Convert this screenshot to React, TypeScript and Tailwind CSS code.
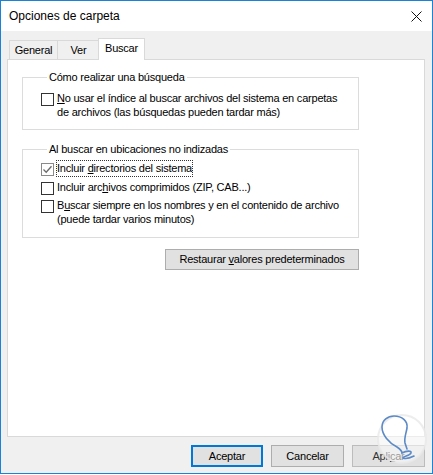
import { useState } from 'react';

function CheckBox({ checked }: { checked?: boolean }) {
  return (
    <span
      className={`mt-[2px] flex h-[13px] w-[13px] shrink-0 items-center justify-center border bg-white ${
        checked ? 'border-[#8a8a8a]' : 'border-[#333333]'
      }`}
    >
      {checked && (
        <svg width="11" height="11" viewBox="0 0 11 11">
          <path d="M1.5 5.5 L4.2 8.2 L9.5 2.2" fill="none" stroke="#6a6a6a" strokeWidth="1.3" />
        </svg>
      )}
    </span>
  );
}

function GroupBox({ title, className, children }: { title: string; className: string; children: React.ReactNode }) {
  return (
    <fieldset className={`w-[337px] border border-[#dcdcdc] pl-[18px] ${className}`}>
      <legend className="ml-[6px] px-[2px] leading-[13px]">{title}</legend>
      {children}
    </fieldset>
  );
}

export default function App() {
  const [opts, setOpts] = useState({ noIndex: false, sysDirs: true, zip: false, content: false });
  const toggle = (k: keyof typeof opts) => setOpts(p => ({ ...p, [k]: !p[k] }));

  return (
    <div
      className="relative flex h-[474px] w-[433px] flex-col overflow-hidden border border-[#1883d7] bg-[#f0f0f0] text-[11px] text-black"
      style={{ fontFamily: '"Liberation Sans", Arial, sans-serif' }}
    >
      {/* Title bar */}
      <div className="flex h-[30px] items-center justify-between bg-white pl-[8px] pr-[10px]">
        <span className="text-[12px]">Opciones de carpeta</span>
        <svg width="11" height="11" viewBox="0 0 11 11">
          <path d="M0.5 0.5 L10.5 10.5 M10.5 0.5 L0.5 10.5" stroke="#111" strokeWidth="1" />
        </svg>
      </div>

      <div className="flex flex-1 flex-col pl-[6px] pt-[7px] tracking-[-0.22px]">
        {/* Tabs */}
        <div className="ml-[2px] flex h-[21px] items-end">
          <div className="flex h-[19px] w-[48px] items-center justify-center border-l border-t border-[#d9d9d9]">General</div>
          <div className="flex h-[19px] w-[43px] items-center justify-center border-x border-t border-[#d9d9d9]">Ver</div>
          <div className="relative z-10 -mb-px -ml-[2px] flex h-[22px] w-[47px] items-center justify-center border-x border-t border-[#d9d9d9] bg-white pb-[2px]">
            Buscar
          </div>
        </div>

        {/* Panel */}
        <div className="flex h-[378px] w-[418px] flex-col border border-[#d9d9d9] bg-white pl-[14px] pt-[11px]">
          <GroupBox title="Cómo realizar una búsqueda" className="h-[59px]">
            <label className="mt-[7px] flex gap-[3px] leading-[14px]" onClick={() => toggle('noIndex')}>
              <CheckBox checked={opts.noIndex} />
              <span>
                <u>N</u>o usar el índice al buscar archivos del sistema en carpetas
                <br />
                de archivos (las búsquedas pueden tardar más)
              </span>
            </label>
          </GroupBox>

          <GroupBox title="Al buscar en ubicaciones no indizadas" className="mt-[13px] h-[95px]">
            <label className="mt-[5px] flex gap-[3px] leading-[14px]" onClick={() => toggle('sysDirs')}>
              <CheckBox checked={opts.sysDirs} />
              <span className="outline outline-1 outline-dotted outline-[#333]">
                Incluir <u>d</u>irectorios del sistema
              </span>
            </label>
            <label className="mt-[4px] flex gap-[3px] leading-[14px]" onClick={() => toggle('zip')}>
              <CheckBox checked={opts.zip} />
              <span>
                Incluir arc<u>h</u>ivos comprimidos (ZIP, CAB...)
              </span>
            </label>
            <label className="mt-[3px] flex gap-[3px] leading-[14px]" onClick={() => toggle('content')}>
              <CheckBox checked={opts.content} />
              <span>
                B<u>u</u>scar siempre en los nombres y en el contenido de archivo
                <br />
                (puede tardar varios minutos)
              </span>
            </label>
          </GroupBox>

          <div className="mt-[11px] flex w-[337px] justify-end">
            <button className="h-[21px] w-[194px] border border-[#adadad] bg-[#e1e1e1]">
              Restaurar <u>v</u>alores predeterminados
            </button>
          </div>
        </div>

        {/* Dialog buttons */}
        <div className="mt-[8px] flex w-[418px] justify-end gap-[8px]">
          <button className="h-[22px] w-[72px] border-2 border-[#0078d7] bg-[#e1e1e1]">Aceptar</button>
          <button className="h-[22px] w-[73px] border border-[#adadad] bg-[#e1e1e1]">Cancelar</button>
          <button className="h-[22px] w-[73px] border border-[#bcbcbc] bg-[#e1e1e1] text-[#333]">
            Apli<u>c</u>ar
          </button>
        </div>
      </div>

      {/* Watermark */}
      <svg className="pointer-events-none absolute left-[374px] top-[411px]" width="54" height="54" viewBox="0 0 54 54">
        <circle cx="27" cy="27" r="24" fill="#ffffff" fillOpacity="0.5" stroke="#e8e8e8" strokeOpacity="0.8" strokeWidth="2" />
        <path
          d="M22 35 C14 31 7 23 7 15 C7 8 13 4 19 4 C27 4 33 9 32 16 C31 22 29 26 30 31 L32 37 M22 35 C25 37 27 39 27 41 C31 39 37 38 36 41 C35 44 28 44 28 46 C30 47 35 46 39 44"
          fill="none"
          stroke="#5b8ac6"
          strokeWidth="1.6"
          strokeLinecap="round"
        />
      </svg>
    </div>
  );
}
